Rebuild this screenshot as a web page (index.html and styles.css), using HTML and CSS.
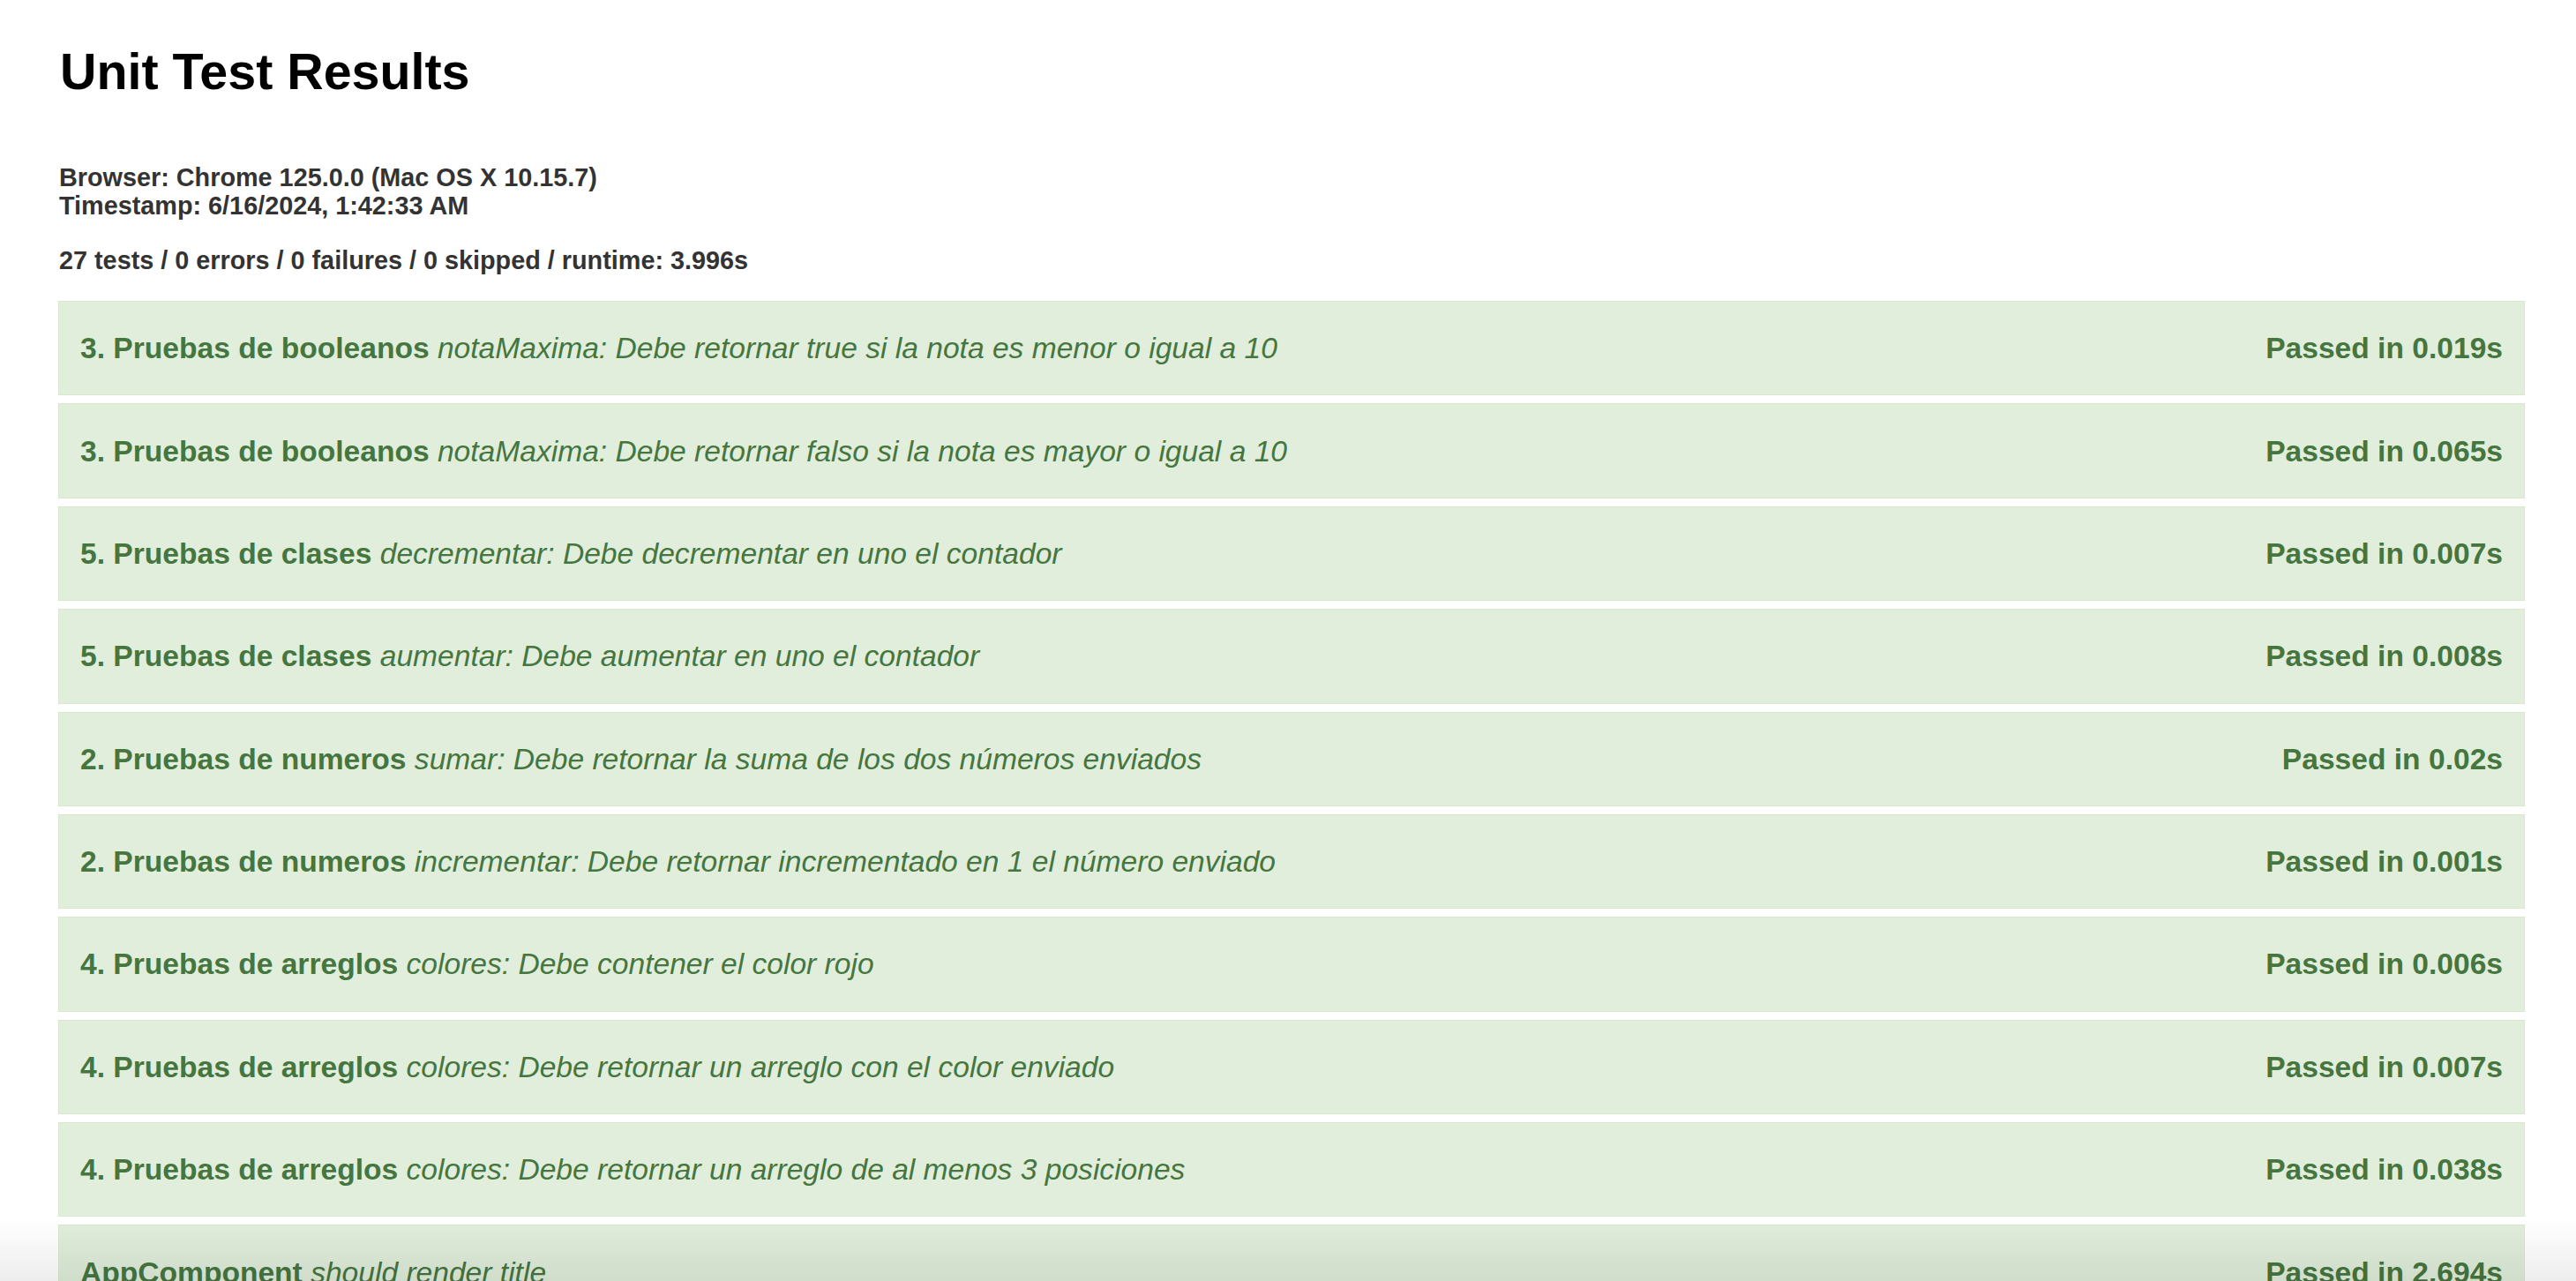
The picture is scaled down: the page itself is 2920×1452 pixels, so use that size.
FILE: index.html
```html
<!DOCTYPE html>
<html lang="en">
<head>
<meta charset="utf-8">
<title>Unit Test Results</title>
<link rel="stylesheet" href="styles.css">
</head>
<body>
<main class="page">
  <h1 class="title">Unit Test Results</h1>
  <div class="info">
    <div>Browser: Chrome 125.0.0 (Mac OS X 10.15.7)</div>
    <div>Timestamp: 6/16/2024, 1:42:33 AM</div>
  </div>
  <div class="summary">27 tests / 0 errors / 0 failures / 0 skipped / runtime: 3.996s</div>
  <div class="specs">
    <div class="spec"><span class="name"><b>3. Pruebas de booleanos</b> <i>notaMaxima: Debe retornar true si la nota es menor o igual a 10</i></span><span class="time">Passed in 0.019s</span></div>
    <div class="spec"><span class="name"><b>3. Pruebas de booleanos</b> <i>notaMaxima: Debe retornar falso si la nota es mayor o igual a 10</i></span><span class="time">Passed in 0.065s</span></div>
    <div class="spec"><span class="name"><b>5. Pruebas de clases</b> <i>decrementar: Debe decrementar en uno el contador</i></span><span class="time">Passed in 0.007s</span></div>
    <div class="spec"><span class="name"><b>5. Pruebas de clases</b> <i>aumentar: Debe aumentar en uno el contador</i></span><span class="time">Passed in 0.008s</span></div>
    <div class="spec"><span class="name"><b>2. Pruebas de numeros</b> <i>sumar: Debe retornar la suma de los dos números enviados</i></span><span class="time">Passed in 0.02s</span></div>
    <div class="spec"><span class="name"><b>2. Pruebas de numeros</b> <i>incrementar: Debe retornar incrementado en 1 el número enviado</i></span><span class="time">Passed in 0.001s</span></div>
    <div class="spec"><span class="name"><b>4. Pruebas de arreglos</b> <i>colores: Debe contener el color rojo</i></span><span class="time">Passed in 0.006s</span></div>
    <div class="spec"><span class="name"><b>4. Pruebas de arreglos</b> <i>colores: Debe retornar un arreglo con el color enviado</i></span><span class="time">Passed in 0.007s</span></div>
    <div class="spec"><span class="name"><b>4. Pruebas de arreglos</b> <i>colores: Debe retornar un arreglo de al menos 3 posiciones</i></span><span class="time">Passed in 0.038s</span></div>
    <div class="spec"><span class="name"><b>AppComponent</b> <i>should render title</i></span><span class="time">Passed in 2.694s</span></div>
  </div>
</main>
<div class="bottom-shade"></div>
</body>
</html>
```
FILE: styles.css
```css
html, body {
  margin: 0;
  padding: 0;
  background: #ffffff;
}

body {
  font-family: "Liberation Sans", Arial, Helvetica, sans-serif;
  font-size: 28.8px;
  color: #333333;
}

.page {
  padding: 49px 58px 40px 66px;
  display: flex;
  flex-direction: column;
}

.title {
  margin: 0 0 0 2px;
  font-size: 57.4px;
  line-height: 64px;
  font-weight: bold;
  color: #000000;
}

.info {
  margin: 72px 0 0 1px;
  font-weight: bold;
  line-height: 32px;
}

.summary {
  margin: 30px 0 0 1px;
  font-weight: bold;
  line-height: 32px;
}

.specs {
  margin-top: 30px;
  display: flex;
  flex-direction: column;
  gap: 9px;
}

.spec {
  display: flex;
  justify-content: space-between;
  align-items: center;
  background: #e1eedb;
  border: 1px solid #d7e8cc;
  padding: 33.2px 24px 33.2px 24px;
  font-size: 33.6px;
  line-height: 39px;
  color: #467640;
}

.spec b {
  font-weight: bold;
}

.spec i {
  font-style: italic;
  font-weight: normal;
}

.time {
  font-weight: bold;
  white-space: nowrap;
}

.bottom-shade {
  position: fixed;
  left: 0;
  right: 0;
  bottom: 0;
  height: 70px;
  pointer-events: none;
  background: linear-gradient(to bottom, rgba(0, 0, 0, 0), rgba(0, 0, 0, 0.07));
}
```
